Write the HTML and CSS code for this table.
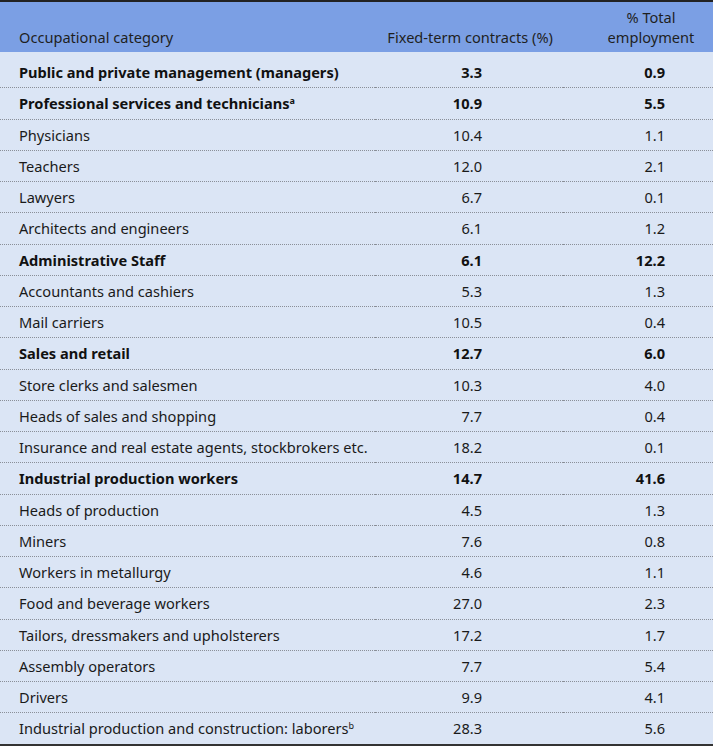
FILE: index.html
```html
<!DOCTYPE html>
<html lang="en">
<head>
<meta charset="utf-8">
<title>Fixed-term contracts by occupational category</title>
<link rel="stylesheet" href="styles.css">
</head>
<body>
<table class="tbl">
  <colgroup>
    <col class="c1"><col class="c2"><col class="c3">
  </colgroup>
  <thead>
    <tr>
      <th class="h1">Occupational category</th>
      <th class="h2">Fixed-term contracts (%)</th>
      <th class="h3">% Total<br>employment</th>
    </tr>
  </thead>
  <tbody>
    <tr class="b first"><td>Public and private management (managers)</td><td class="n2">3.3</td><td class="n3">0.9</td></tr>
    <tr class="b"><td>Professional services and technicians<sup>a</sup></td><td class="n2">10.9</td><td class="n3">5.5</td></tr>
    <tr><td>Physicians</td><td class="n2">10.4</td><td class="n3">1.1</td></tr>
    <tr><td>Teachers</td><td class="n2">12.0</td><td class="n3">2.1</td></tr>
    <tr><td>Lawyers</td><td class="n2">6.7</td><td class="n3">0.1</td></tr>
    <tr><td>Architects and engineers</td><td class="n2">6.1</td><td class="n3">1.2</td></tr>
    <tr class="b"><td>Administrative Staff</td><td class="n2">6.1</td><td class="n3">12.2</td></tr>
    <tr><td>Accountants and cashiers</td><td class="n2">5.3</td><td class="n3">1.3</td></tr>
    <tr><td>Mail carriers</td><td class="n2">10.5</td><td class="n3">0.4</td></tr>
    <tr class="b"><td>Sales and retail</td><td class="n2">12.7</td><td class="n3">6.0</td></tr>
    <tr><td>Store clerks and salesmen</td><td class="n2">10.3</td><td class="n3">4.0</td></tr>
    <tr><td>Heads of sales and shopping</td><td class="n2">7.7</td><td class="n3">0.4</td></tr>
    <tr><td>Insurance and real estate agents, stockbrokers etc.</td><td class="n2">18.2</td><td class="n3">0.1</td></tr>
    <tr class="b"><td>Industrial production workers</td><td class="n2">14.7</td><td class="n3">41.6</td></tr>
    <tr><td>Heads of production</td><td class="n2">4.5</td><td class="n3">1.3</td></tr>
    <tr><td>Miners</td><td class="n2">7.6</td><td class="n3">0.8</td></tr>
    <tr><td>Workers in metallurgy</td><td class="n2">4.6</td><td class="n3">1.1</td></tr>
    <tr><td>Food and beverage workers</td><td class="n2">27.0</td><td class="n3">2.3</td></tr>
    <tr><td>Tailors, dressmakers and upholsterers</td><td class="n2">17.2</td><td class="n3">1.7</td></tr>
    <tr><td>Assembly operators</td><td class="n2">7.7</td><td class="n3">5.4</td></tr>
    <tr><td>Drivers</td><td class="n2">9.9</td><td class="n3">4.1</td></tr>
    <tr class="last"><td>Industrial production and construction: laborers<sup>b</sup></td><td class="n2">28.3</td><td class="n3">5.6</td></tr>
  </tbody>
</table>
</body>
</html>
```

FILE: styles.css
```css
html, body {
  margin: 0;
  padding: 0;
  background: #ffffff;
}

body {
  font-family: "Noto Sans", "Open Sans", sans-serif;
  font-size: 14.6px;
  color: #1a1a1a;
}

.tbl {
  width: 713px;
  border-collapse: collapse;
  table-layout: fixed;
  border-top: 2px solid #222222;
  border-bottom: 3px solid #333333;
}

.c1 { width: 375px; }
.c2 { width: 188px; }
.c3 { width: 150px; }

thead th {
  background: #7b9fe4;
  font-weight: normal;
  line-height: 20px;
  padding: 5px 0 5px 0;
  vertical-align: bottom;
  color: #1f1f1f;
}

.h1 {
  text-align: left;
  padding-left: 19px;
}

.h2 {
  text-align: right;
  padding-right: 10px;
}

.h3 {
  text-align: center;
  padding-left: 36px;
  padding-right: 10px;
}

tbody td {
  background: #dbe5f5;
  line-height: 20px;
  padding: 5px 0 5.25px 0;
  border-bottom: 1px dotted #8a8f98;
  vertical-align: middle;
}

tbody td:first-child {
  padding-left: 19px;
}

tbody tr.first td {
  padding-top: 10px;
}

tbody tr.last td {
  border-bottom: none;
}

.b td {
  font-weight: bold;
  color: #111111;
}

.n2 {
  text-align: right;
  padding-right: 81px !important;
}

.n3 {
  text-align: right;
  padding-right: 48px !important;
}

sup {
  font-size: 9px;
  line-height: 0;
  vertical-align: 5px;
}
```
